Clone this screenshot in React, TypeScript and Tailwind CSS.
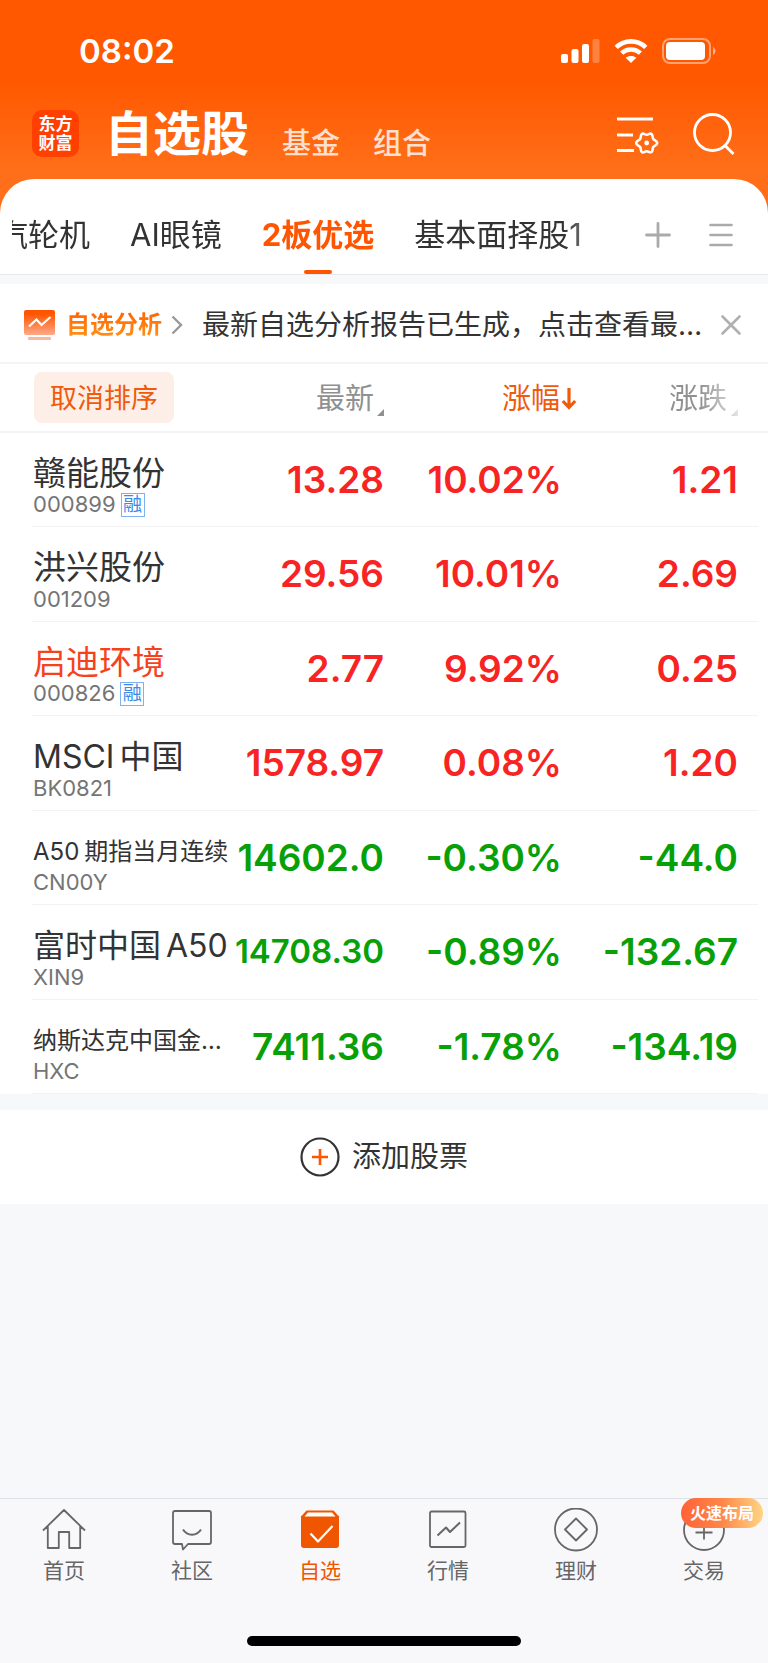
import type { ReactNode } from 'react';

type Stock = {
  name: string[];
  code: string;
  price: string;
  percent: string;
  change: string;
  margin?: boolean;
  nameClass?: string;
  priceClass?: string;
};

const stocks: Stock[] = [
  { name: ['赣能股份'], code: '000899', price: '13.28', percent: '10.02%', change: '1.21', margin: true },
  { name: ['洪兴股份'], code: '001209', price: '29.56', percent: '10.01%', change: '2.69' },
  { name: ['启迪环境'], code: '000826', price: '2.77', percent: '9.92%', change: '0.25', margin: true, nameClass: 'text-[33px] text-[#f5421c]' },
  { name: ['MSCI', '中国'], code: 'BK0821', price: '1578.97', percent: '0.08%', change: '1.20', nameClass: 'text-[32px] text-[#333]' },
  { name: ['A50', '期指当月连续'], code: 'CN00Y', price: '14602.0', percent: '-0.30%', change: '-44.0', nameClass: 'text-[24px] text-[#333]' },
  { name: ['富时中国', 'A50'], code: 'XIN9', price: '14708.30', percent: '-0.89%', change: '-132.67', nameClass: 'text-[32px] text-[#333]', priceClass: 'text-[33px]' },
  { name: ['纳斯达克中国金…'], code: 'HXC', price: '7411.36', percent: '-1.78%', change: '-134.19', nameClass: 'text-[24px] text-[#333]' },
];

function StatusBar() {
  return (
    <div className="flex h-[102px] items-center justify-between pl-[79px] pr-[52px] text-white">
      <span className="text-[33px] font-semibold leading-10">08:02</span>
      <div className="flex items-center gap-[14px]">
        <svg className="h-6 w-[39px]" viewBox="0 0 39 24" fill="currentColor" aria-hidden="true">
          <rect x="0" y="15" width="7" height="9" rx="2" />
          <rect x="10.500" y="10" width="7" height="14" rx="2" />
          <rect x="21" y="5" width="7" height="19" rx="2" />
          <rect x="31.500" y="0" width="7" height="24" rx="2" opacity="0.25" />
        </svg>
        <svg className="h-6 w-[34px]" viewBox="0 0 34 24" fill="none" stroke="currentColor" strokeWidth="4.600" aria-hidden="true">
          <path d="M2.200 8.400C10.500 .4 23.500 .4 31.800 8.400" />
          <path d="M7.600 14.100C13 9.200 21 9.200 26.400 14.100" />
          <path d="M17 24l-5.300-5.200c3-2.500 7.600-2.500 10.600 0z" fill="currentColor" stroke="none" />
        </svg>
        <svg className="h-[26px] w-[54px]" viewBox="0 0 54 26" aria-hidden="true">
          <rect x="1" y="1" width="47" height="24" rx="7" fill="none" stroke="#fff" strokeOpacity="0.45" strokeWidth="2" />
          <rect x="4" y="4" width="39" height="18" rx="4" fill="#fff" />
          <path d="M51 9c3.300 1.500 3.300 6.500 0 8z" fill="#fff" opacity="0.5" />
        </svg>
      </div>
    </div>
  );
}

function TitleBar() {
  return (
    <div className="flex h-[77px] items-center pb-[14px] pl-8 pr-[33px]">
      <div className="flex size-[47px] flex-col items-center justify-center rounded-[10px] bg-[#ff4000] text-[17px] font-bold leading-[19px] text-white">
        <span>东方</span>
        <span>财富</span>
      </div>
      <nav className="ml-[26px] flex items-end text-[#ffdfcd]">
        <a href="#stocks" className="text-[48px] font-bold leading-[64px] text-white">自选股</a>
        <a href="#funds" className="ml-[33px] text-[29px] font-medium leading-[44px]">基金</a>
        <a href="#portfolio" className="ml-[33px] text-[29px] font-medium leading-[44px]">组合</a>
      </nav>
      <div className="ml-auto flex gap-[34px] text-white">
        <button type="button" aria-label="列表设置">
          <svg className="h-11 w-[42px]" viewBox="0 0 42 44" fill="none" stroke="currentColor" strokeWidth="2.800">
            <path d="M0 7h36M0 23h16M0 38.500h17" />
            <path strokeWidth="2.600" strokeLinejoin="round" d="M24.800 22C26.600 20.800 27.700 22.800 29.700 22.800S32.800 20.800 34.600 22C35.900 22.900 35.200 25.400 36.300 27S40.200 28.600 40.200 31 37.400 33.400 36.300 35 35.900 39.100 34.600 40C32.800 41.200 31.700 39.200 29.700 39.200S26.600 41.200 24.800 40C23.500 39.100 24.200 36.600 23.100 35S19.200 33.400 19.200 31 22 28.600 23.100 27 23.500 22.900 24.800 22Z" />
            <circle cx="29.700" cy="31" r="2.400" fill="currentColor" stroke="none" />
          </svg>
        </button>
        <button type="button" aria-label="搜索">
          <svg className="h-11 w-[42px]" viewBox="0 0 42 44" fill="none" stroke="currentColor" strokeWidth="2.800">
            <circle cx="19.500" cy="20.500" r="18" />
            <path d="M32 33.500l8.500 8.500" />
          </svg>
        </button>
      </div>
    </div>
  );
}

function GroupTabs() {
  return (
    <div className="flex h-24 items-stretch rounded-t-[34px] border-b border-[#e8e8ea] bg-white pl-3 pr-[35px] text-[31px] leading-10 text-[#333]">
      <div className="min-w-0 flex-1 overflow-hidden [mask-image:linear-gradient(to_right,#000_calc(100%_-_76px),transparent_calc(100%_-_8px))]">
        <div className="-ml-[15px] flex h-full gap-10 whitespace-nowrap">
          <a href="#turbine" className="pt-9">汽轮机</a>
          <a href="#glasses" className="pt-9">AI眼镜</a>
          <a href="#picks" aria-current="true" className="flex flex-col items-center justify-between pt-9 font-bold text-[#ff5500]">
            2板优选
            <span className="h-1 w-7 rounded-sm bg-[#ff5500]" />
          </a>
          <a href="#fundamental" className="pt-9">基本面择股1</a>
        </div>
      </div>
      <div className="ml-1 flex items-center gap-[37px] pt-4 text-[#aaa]">
        <button type="button" aria-label="添加分组">
          <svg className="size-7" viewBox="0 0 28 28" stroke="currentColor" strokeWidth="2.800" strokeLinecap="round">
            <path d="M14 2.500v23M2.500 14h23" />
          </svg>
        </button>
        <button type="button" aria-label="分组列表">
          <svg className="h-7 w-6" viewBox="0 0 24 28" stroke="currentColor" strokeWidth="2.600" strokeLinecap="round">
            <path d="M1.500 4h21M1.500 14h21M1.500 24h21" />
          </svg>
        </button>
      </div>
    </div>
  );
}

function Notice() {
  return (
    <div className="flex h-20 items-center border-b-2 border-[#f4f4f5] bg-white pl-6 pr-[26px] pt-1">
      <svg className="h-[30px] w-[31px]" viewBox="0 0 31 30" aria-hidden="true">
        <defs>
          <linearGradient id="report" x1="0" y1="0" x2="0" y2="1">
            <stop offset="0.150" stopColor="#ff5500" />
            <stop offset="1" stopColor="#ffa98a" />
          </linearGradient>
        </defs>
        <rect width="31" height="25" rx="2" fill="url(#report)" />
        <rect x="4" y="27" width="23" height="3" rx="1" fill="#ffb79c" />
        <path d="M5 16.500l7.500-7 5 5.500L26.500 7" fill="none" stroke="#fff" strokeWidth="2.200" />
      </svg>
      <a href="#analysis" className="ml-[11px] flex items-center gap-[9px]">
        <span className="bg-linear-to-b from-[#ff5a00] to-[#ff9a1a] bg-clip-text text-[24px] font-bold leading-9 text-transparent">自选分析</span>
        <svg className="h-5 w-3" viewBox="0 0 12 20" fill="none" stroke="#999" strokeWidth="2.400" aria-hidden="true">
          <path d="M1.500 1.500L10 10l-8.500 8.500" />
        </svg>
      </a>
      <p className="ml-[19px] min-w-0 flex-1 whitespace-nowrap text-[28px] leading-10 text-[#333]">最新自选分析报告已生成，点击查看最…</p>
      <button type="button" aria-label="关闭">
        <svg className="size-[22px]" viewBox="0 0 22 22" stroke="#b0b0b0" strokeWidth="2.600" strokeLinecap="round">
          <path d="M2.500 2.500l17 17M19.500 2.500l-17 17" />
        </svg>
      </button>
    </div>
  );
}

function Triangle() {
  return (
    <svg className="mb-[3px] size-[7px]" viewBox="0 0 7 7" fill="currentColor" aria-hidden="true">
      <path d="M7 0v7H0z" />
    </svg>
  );
}

function StockTable() {
  return (
    <div className="bg-white">
      <table className="w-full table-fixed border-collapse">
        <thead>
          <tr className="h-[68px] border-b-2 border-[#f4f4f5] text-[29px] leading-10 text-[#909090]">
            <th className="w-[236px] p-0 pl-[34px] text-left font-normal">
              <button type="button" className="block h-[51px] rounded-lg bg-[#fdeee8] px-4 pt-[3px] text-[27px] text-[#f05a0a]">取消排序</button>
            </th>
            <th className="w-[148px] p-0 pt-[3px] font-normal">
              <button type="button" className="ml-auto flex items-end gap-[3px]">最新<Triangle /></button>
            </th>
            <th className="w-[193px] p-0 pt-[3px] font-normal text-[#f05a0a]">
              <button type="button" className="ml-auto flex items-center gap-px">
                涨幅
                <svg className="h-6 w-4" viewBox="0 0 16 24" fill="none" stroke="currentColor" strokeWidth="3.200" aria-hidden="true">
                  <path d="M8 1v19M1.800 14L8 20.500 14.200 14" />
                </svg>
              </button>
            </th>
            <th className="p-0 pr-[30px] pt-[3px] font-normal">
              <button type="button" className="ml-auto flex items-end gap-1 [mask-image:linear-gradient(to_right,#000_45%,rgba(0,0,0,0.25))]">涨跌<Triangle /></button>
            </th>
          </tr>
        </thead>
      </table>
      <table className="ml-8 w-[calc(100%_-_42px)] table-fixed border-separate border-spacing-0">
        <tbody>
          {stocks.map((s) => (
            <tr
              key={s.code}
              className={
                s.change.startsWith('-')
                  ? 'h-[94px] text-[#07a007] even:h-[95px] [&>td]:border-b [&>td]:border-[#f3f3f4]'
                  : 'h-[94px] text-[#f82424] even:h-[95px] [&>td]:border-b [&>td]:border-[#f3f3f4]'
              }
            >
              <td className="w-[204px] whitespace-nowrap p-0 pl-px pt-3">
                <div className={`flex h-[38px] items-center gap-[5px] ${s.nameClass ?? 'text-[33px] text-[#333]'}`}>
                  {s.name.map((part) => (
                    <span key={part}>{part}</span>
                  ))}
                </div>
                <div className="flex h-6 items-center gap-[5px] text-[22px] text-[#757575]">
                  {s.code}
                  {s.margin && (
                    <span className="flex size-6 items-center justify-center border border-[#7fb2f0] text-[19px] leading-5 text-[#3c8ae6]">融</span>
                  )}
                </div>
              </td>
              <td className={`w-[148px] p-0 text-right font-semibold ${s.priceClass ?? 'text-[37px]'}`}>
                <div className="flex h-12 items-center justify-end">{s.price}</div>
              </td>
              <td className="w-[178px] p-0 text-right text-[37px] font-semibold">{s.percent}</td>
              <td className="p-0 pr-5 text-right text-[37px] font-semibold">{s.change}</td>
            </tr>
          ))}
        </tbody>
      </table>
    </div>
  );
}

function NavItem({ label, active, badge, children }: { label: string; active?: boolean; badge?: string; children: ReactNode }) {
  return (
    <a href={`#${label}`} className={active ? 'relative flex flex-1 flex-col items-center gap-[5px] text-[#f05500]' : 'relative flex flex-1 flex-col items-center gap-[5px] text-[#666]'}>
      <svg className="size-11" viewBox="0 0 44 44" fill="none" stroke="currentColor" strokeWidth="1.800" strokeLinejoin="round" aria-hidden="true">
        {children}
      </svg>
      <span className="text-[21px] leading-7">{label}</span>
      {badge && (
        <span className="absolute -top-[10px] right-[5px] h-[30px] whitespace-nowrap rounded-full bg-linear-to-r from-[#ff6237] via-[#ff8648] to-[#ffd584] px-[9px] text-[16px] font-bold leading-[30px] text-white">
          {badge}
        </span>
      )}
    </a>
  );
}

function BottomNav() {
  return (
    <div className="mt-auto flex h-[165px] flex-col border-t border-[#e0e1e4] bg-[#f8f8fb] pt-[9px]">
      <nav className="flex">
        <NavItem label="首页">
          <path d="M1 22.500L22 2l21 20.500M5.800 18.500V40h11V24h10.400v16h11V18.500" />
        </NavItem>
        <NavItem label="社区">
          <path d="M5 3h34q2 0 2 2v29q0 2-2 2H18l-5 5.500-1-5.500H5q-2 0-2-2V5q0-2 2-2z" />
          <path d="M13 21.500c4.500 7 13.500 7 18 0" strokeWidth="2" />
        </NavItem>
        <NavItem label="自选" active>
          <path d="M8.500 2.500h27L41 8.500V37q0 3-3 3H6q-3 0-3-3V8.500z" fill="currentColor" stroke="none" />
          <path d="M10 4.500h24l3.500 4H6.500z" fill="#fff" stroke="none" />
          <path d="M12.500 25.500l7.500 8L34.500 18" stroke="#fff" strokeWidth="2.200" />
        </NavItem>
        <NavItem label="行情">
          <rect x="4" y="3.500" width="35.500" height="35.500" rx="1.500" />
          <path d="M11.500 27.500l8.500-8 4 4.500L34 14.500" strokeWidth="2" />
        </NavItem>
        <NavItem label="理财">
          <circle cx="22" cy="21.500" r="21" />
          <path d="M22 10.500l11 11-11 11-11-11z" />
        </NavItem>
        <NavItem label="交易" badge="火速布局">
          <circle cx="22" cy="22" r="20" />
          <path d="M22 13.500v18M13.500 24.500h17" />
        </NavItem>
      </nav>
      <div className="mx-auto mb-[17px] mt-auto h-[10px] w-[274px] rounded-full bg-black" />
    </div>
  );
}

export default function App() {
  return (
    <div className="flex min-h-screen flex-col bg-[#f6f8fa] font-['Inter','Noto_Sans_CJK_SC',sans-serif]">
      <header className="bg-[linear-gradient(to_bottom,#ff5800_80px,#ff6f19_170px)]">
        <StatusBar />
        <TitleBar />
        <GroupTabs />
      </header>
      <main>
        <div className="pt-[9px]">
          <Notice />
        </div>
        <StockTable />
        <button type="button" className="mt-4 flex h-[94px] w-full items-center justify-center gap-3 bg-white text-[29px] text-[#333]">
          <svg className="size-10" viewBox="0 0 40 40" fill="none" aria-hidden="true">
            <circle cx="20" cy="20" r="18.500" stroke="#333" strokeWidth="2.200" />
            <path d="M20 12v16M12 20h16" stroke="#ff5500" strokeWidth="2.600" />
          </svg>
          添加股票
        </button>
      </main>
      <BottomNav />
    </div>
  );
}
